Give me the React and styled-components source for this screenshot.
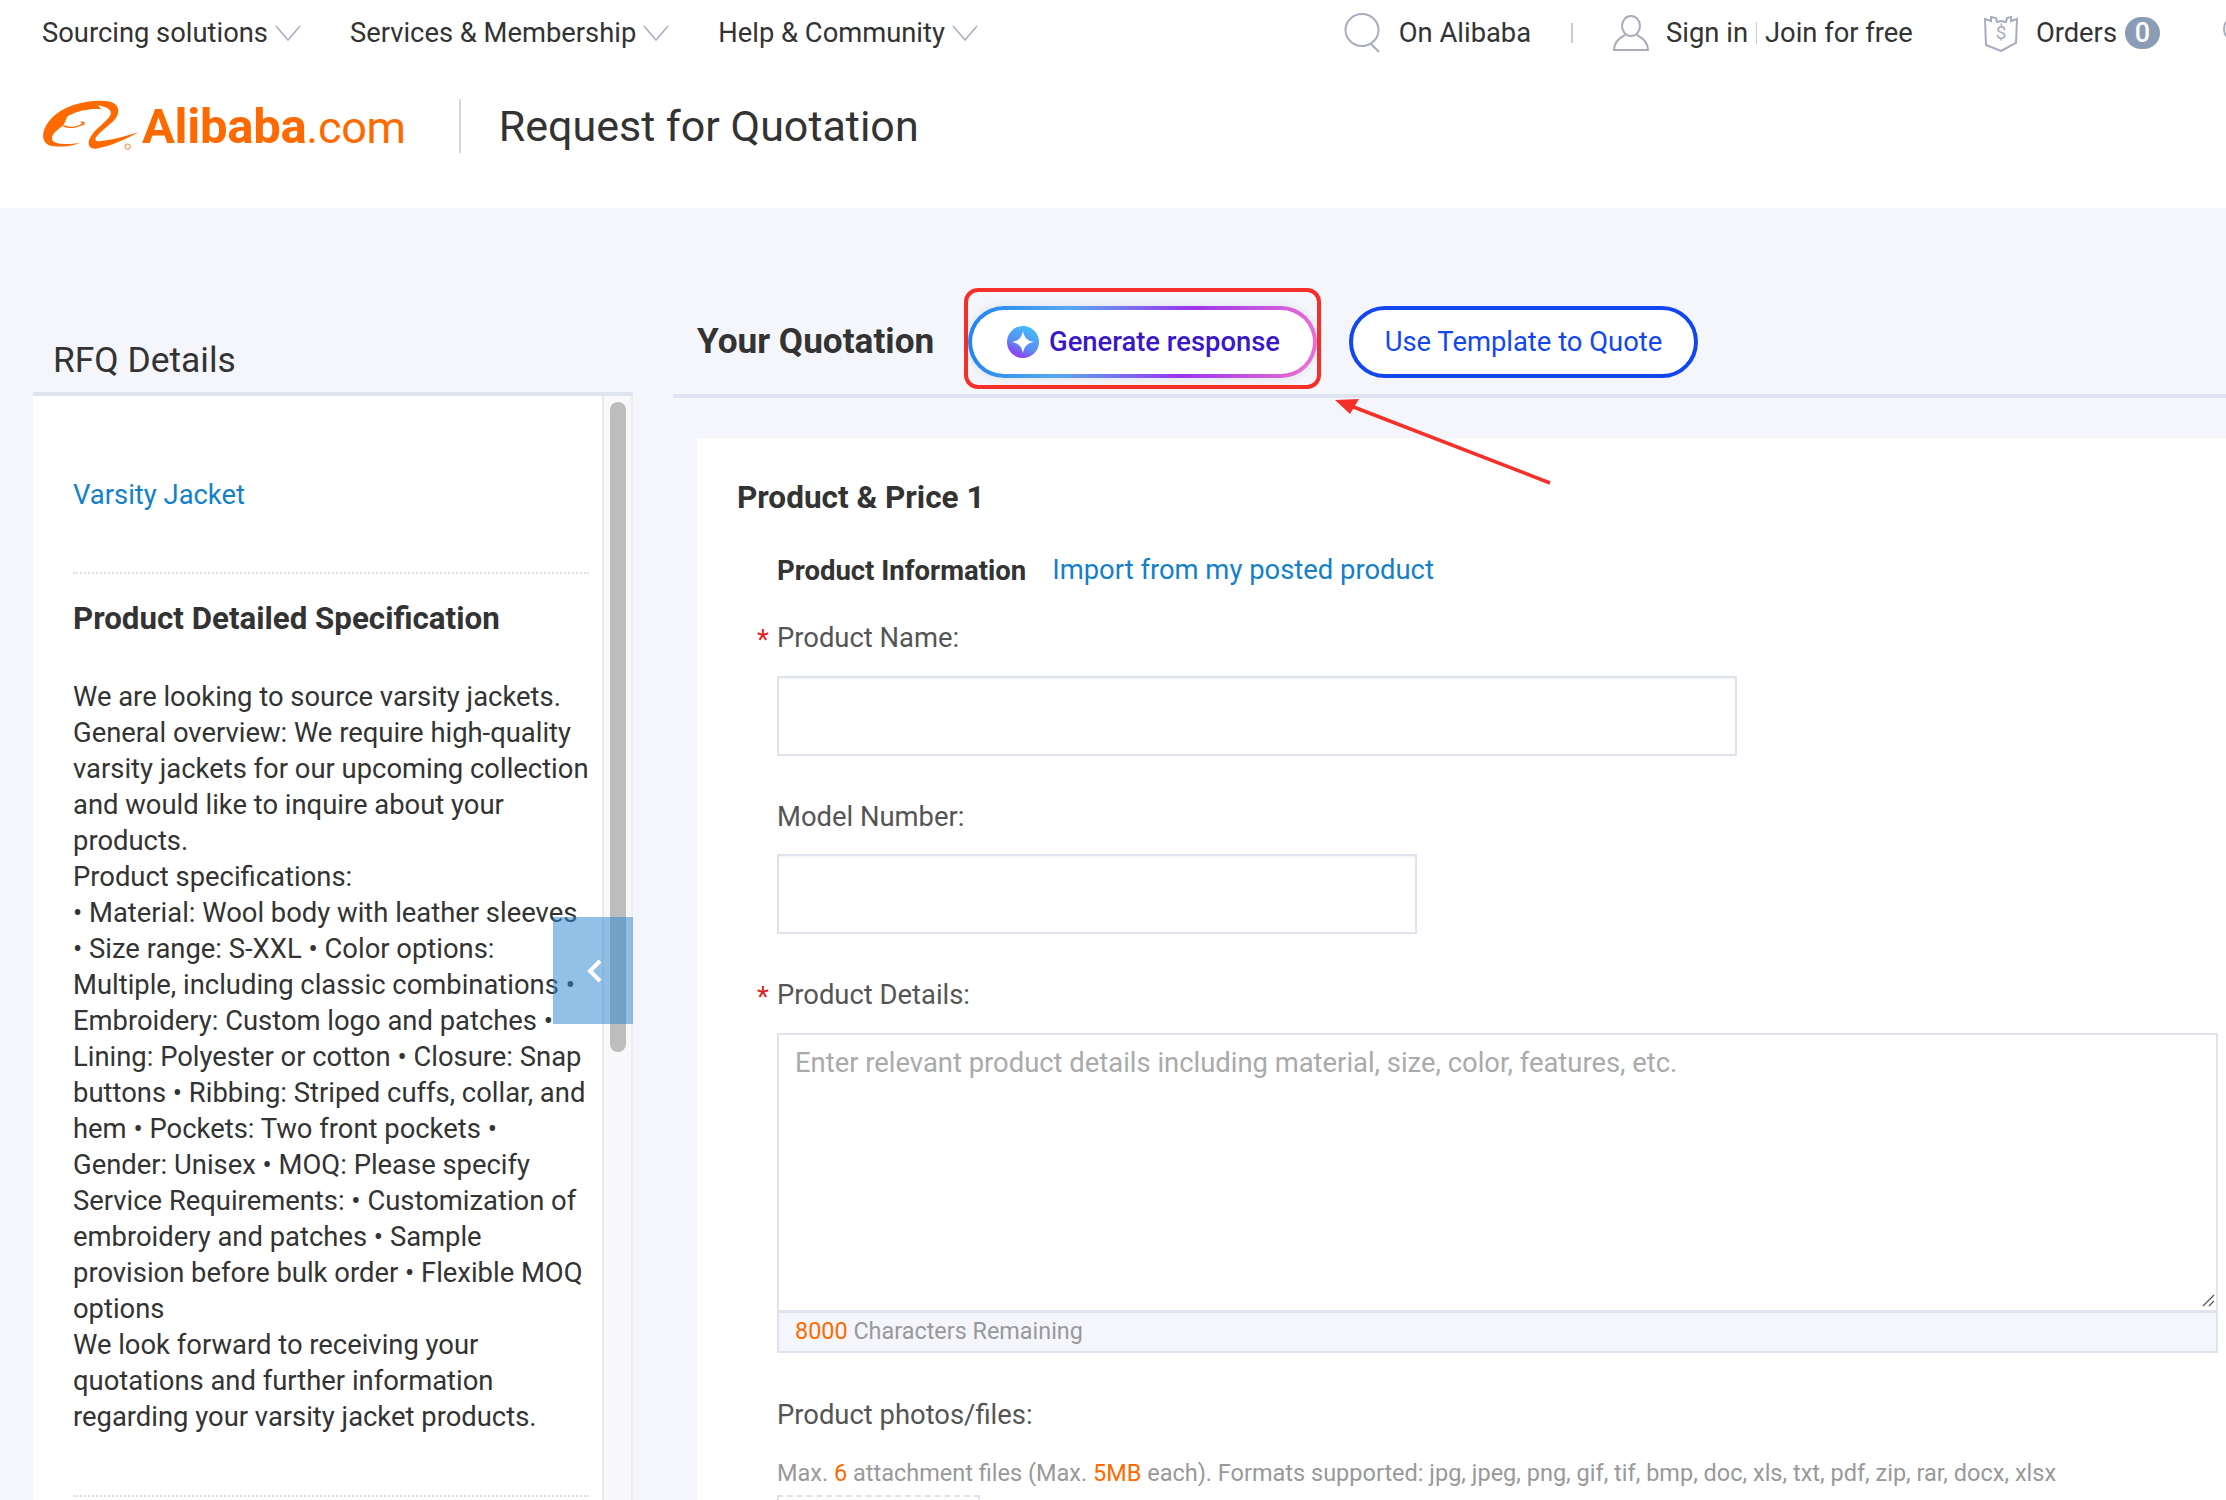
import React from 'react';
import styled, { createGlobalStyle } from 'styled-components';

const GlobalStyle = createGlobalStyle`
  html, body { margin: 0; padding: 0; }
  body { font-family: Roboto, "Liberation Sans", sans-serif; color: #333; background: #f4f6fb; }
  * { box-sizing: border-box; }
`;

const Page = styled.div`
  position: relative;
  width: 2226px;
  height: 1500px;
  overflow: hidden;
  background: #f4f6fb;
`;

const Header = styled.header`
  height: 208px;
  background: #fff;
  padding: 0 0 0 42px;
`;

const TopBar = styled.div`
  display: flex;
  align-items: center;
  height: 66px;
`;

const NavItem = styled.a`
  display: flex;
  align-items: center;
  gap: 7px;
  font-size: 27.35px;
  color: #333;
  margin-right: 49px;
  white-space: nowrap;
`;

const TopRight = styled.div`
  display: flex;
  align-items: center;
  margin-left: auto;
  margin-right: -8px;
`;

const TopLink = styled.span`
  display: flex;
  align-items: center;
  font-size: 27.35px;
  color: #333;
  white-space: nowrap;
  gap: ${p => p.$gap || 17}px;
  margin-right: ${p => p.$right || 0}px;
`;

const ThinBar = styled.i`
  display: inline-block;
  width: ${p => p.$w || 2}px;
  height: ${p => p.$h || 20}px;
  margin: 0 ${p => p.$m || 0}px;
  background: #c9ccd8;
`;

const Badge = styled.b`
  display: inline-flex;
  align-items: center;
  justify-content: center;
  width: 35px;
  height: 32px;
  margin-left: -9px;
  border-radius: 16px;
  background: #8b9cb5;
  color: #fff;
  font-weight: 500;
  font-size: 27px;
`;

const BrandRow = styled.div`
  display: flex;
  align-items: center;
  height: 66px;
  margin-top: 27px;
`;

const LogoText = styled.span`
  font-size: 49px;
  line-height: 1;
  font-weight: 700;
  color: #ff6a00;
  margin-left: 2px;
  letter-spacing: -0.3px;
  span { font-weight: 400; font-size: 45px; }
`;

const BrandRule = styled.i`
  width: 2px;
  height: 54px;
  background: #d5d8e2;
  margin: 0 38px 0 53px;
`;

const PageTitle = styled.h1`
  margin: 0;
  font-size: 43px;
  font-weight: 400;
  color: #333;
`;

const Main = styled.main`
  display: flex;
  gap: 40px;
  padding-left: 33px;
`;

const Side = styled.aside`
  position: relative;
  width: 600px;
  flex: none;
`;

const SideTitle = styled.h2`
  margin: 0;
  height: 188px;
  padding: 126px 0 0 20px;
  border-bottom: 4px solid #dfe4ef;
  font-size: 35.4px;
  line-height: 52px;
  font-weight: 400;
  color: #333;
`;

const SideBody = styled.div`
  display: flex;
  height: 1108px;
`;

const SideContent = styled.div`
  width: 573px;
  background: #fff;
  padding: 82px 13px 0 40px;
  border-right: 2px solid #e8e9ee;
`;

const Track = styled.div`
  flex: 1;
  padding: 6px 5px 0 6px;
  background: #f8f8fa;
  border-right: 2px solid #eee;
`;

const Thumb = styled.div`
  width: 16px;
  height: 650px;
  border-radius: 8px;
  background: #bdbdbd;
`;

const Link = styled.a`
  color: #1380ca;
  font-size: 27.4px;
  line-height: 34px;
`;

const Dotted = styled.div`
  border-top: 2px dotted #dcdfe6;
  margin-top: ${p => p.$top}px;
`;

const SpecTitle = styled.h3`
  margin: 24px 0 0;
  font-size: 31.3px;
  line-height: 42px;
  font-weight: 700;
  color: #333;
`;

const SpecText = styled.p`
  margin: 39px 0 0;
  font-size: 27.4px;
  line-height: 36px;
  color: #333;
  white-space: nowrap;
`;

const Collapse = styled.button`
  position: absolute;
  left: 520px;
  top: 709px;
  width: 80px;
  height: 107px;
  padding: 0 0 0 4px;
  border: 0;
  display: flex;
  align-items: center;
  justify-content: center;
  background: rgba(46, 135, 207, 0.52);
`;

const Right = styled.section`
  flex: 1;
  min-width: 0;
`;

const QuoteBar = styled.div`
  display: flex;
  align-items: center;
  height: 190px;
  padding: 80px 0 0 24px;
  border-bottom: 4px solid #dfe4ef;
`;

const QuoteTitle = styled.h2`
  margin: 0;
  width: 267px;
  font-size: 35.2px;
  font-weight: 700;
  color: #333;
  white-space: nowrap;
`;

const Callout = styled.div`
  display: flex;
  align-items: center;
  justify-content: center;
  width: 357px;
  height: 101px;
  margin-top: -5px;
  padding-top: 6px;
  border: 4px solid #f5302a;
  border-radius: 14px;
`;

const PillButton = styled.button`
  display: inline-flex;
  align-items: center;
  justify-content: center;
  gap: 10px;
  width: 349px;
  height: 72px;
  border-radius: 36px;
  font-family: inherit;
  font-size: 27.4px;
  background: #fff;
  border: 4px solid #1347ee;
  color: #1347ee;
  margin-left: ${p => p.$left || 0}px;
  margin-top: ${p => p.$top || 0}px;
`;

const GenerateButton = styled(PillButton)`
  flex: none;
  width: 349px;
  padding-left: 8px;
  border-color: transparent;
  background: linear-gradient(#fff, #fff) padding-box,
    linear-gradient(100deg, #1d83f0 0%, #57a9ee 28%, #9a35ee 62%, #ef72d0 100%) border-box;
  color: #3a18c8;
  font-weight: 500;
  box-shadow: 0 0 8px rgba(60, 60, 120, 0.12);
`;

const Card = styled.div`
  margin: 40px 0 0 24px;
  padding: 37px 0 0 40px;
  height: 1100px;
  background: #fff;
`;

const CardTitle = styled.h3`
  margin: 0;
  font-size: 31.5px;
  line-height: 46px;
  font-weight: 700;
  color: #333;
`;

const InfoRow = styled.div`
  display: flex;
  gap: 26px;
  align-items: center;
  margin: 27px 0 0 40px;
  height: 44px;
  font-size: 27.4px;
  strong { font-weight: 700; color: #333; font-size: 27.5px; }
`;

const Label = styled.label`
  display: block;
  position: relative;
  margin: ${p => p.$top}px 0 0 40px;
  font-size: 27.4px;
  line-height: 40px;
  color: #555;
`;

const Star = styled.span`
  position: absolute;
  left: -20px;
  top: 2px;
  color: #e02020;
`;

const TextInput = styled.div`
  width: ${p => p.$w}px;
  height: 80px;
  margin: ${p => p.$top}px 0 0 40px;
  border: 2px solid #dfe3ee;
  box-shadow: inset 0 1px 2px #f0f2f6;
`;

const AreaBox = styled.div`
  position: relative;
  width: 1441px;
  margin: 18px 0 0 40px;
  border: 2px solid #dfe3ee;
`;

const Placeholder = styled.div`
  height: 275px;
  padding: 10px 16px;
  font-size: 27.4px;
  line-height: 36px;
  color: #aaa;
`;

const Grip = styled.svg`
  position: absolute;
  right: 1px;
  top: 258px;
`;

const Counter = styled.div`
  height: 41px;
  padding: 0 16px;
  border-top: 3px solid #dfe3ee;
  background: #f4f6fb;
  font-size: 23.4px;
  line-height: 37px;
  color: #999;
  span { color: #ff6a00; }
`;

const Hint = styled.p`
  margin: 20px 0 0 40px;
  font-size: 23.5px;
  line-height: 36px;
  color: #999;
  white-space: nowrap;
  span { color: #ff6a00; }
`;

const UploadBox = styled.div`
  width: 203px;
  height: 60px;
  margin: 4px 0 0 40px;
  border: 2px dashed #dfe3ee;
`;

const ArrowMark = styled.svg`
  position: absolute;
  left: 1325px;
  top: 392px;
`;

const Chevron = () => (
  <svg width="26" height="16" viewBox="0 0 26 16" fill="none">
    <path d="M1 1l12 14L25 1" stroke="#a9acbd" strokeWidth="1.5" />
  </svg>
);

const SearchIcon = () => (
  <svg width="38" height="40" viewBox="0 0 38 40" fill="none" stroke="#a9acbd" strokeWidth="2">
    <ellipse cx="18" cy="17" rx="16.5" ry="16" />
    <path d="M27 31l8 8" />
  </svg>
);

const UserIcon = () => (
  <svg width="36" height="36" viewBox="0 0 36 36" fill="none" stroke="#a9acbd" strokeWidth="2">
    <ellipse cx="18" cy="11" rx="9" ry="10" />
    <path d="M12 20C6 23 1 28 1 35h34c0-7-5-12-11-15" />
  </svg>
);

const OrdersIcon = () => (
  <svg width="36" height="38" viewBox="0 0 36 38" fill="none" stroke="#a9acbd" strokeWidth="2">
    <path d="M2 5l6 2V3l5 1 1 4 4-1 5 1 1-4 4-1v4l6-2-1 24-15 8-15-6z" />
    <text x="18" y="25" fontSize="19" textAnchor="middle" fill="#a9acbd" stroke="none" fontFamily="Roboto, sans-serif">$</text>
  </svg>
);

const EdgeIcon = styled.svg`
  position: absolute;
  left: 2222px;
  top: 14px;
`;

const AlibabaMark = () => (
  <svg width="98" height="52" viewBox="38 42 294 156">
    <path
      fill="#ff6a00"
      d="M75 181C48 180 34 160 45 130C58 95 95 68 135 56C170 46 205 42 235 46C262 50 272 66 264 88C255 110 225 125 205 148C194 160 196 167 212 166C250 162 290 150 327 139C290 160 240 182 200 188C178 190 172 172 184 152C198 128 232 108 243 88C250 72 232 62 205 58L216 70C190 66 150 72 120 88C108 94 112 106 100 120C82 132 62 148 70 164C80 176 120 176 153 170C130 180 100 183 75 181Z"
    />
    <path fill="none" stroke="#ff6a00" strokeWidth="4" d="M102 120C125 128 150 124 163 112M155 108l9 2l-2 8" />
    <circle cx="295" cy="182" r="8" fill="none" stroke="#ff6a00" strokeWidth="2.5" />
  </svg>
);

const SparkIcon = () => (
  <svg width="32" height="32" viewBox="0 0 32 32">
    <defs>
      <linearGradient id="spark" x1="0.75" y1="0" x2="0.25" y2="1">
        <stop offset="0" stopColor="#3fc0f8" />
        <stop offset="0.6" stopColor="#5a8cf5" />
        <stop offset="1" stopColor="#9a2cf0" />
      </linearGradient>
    </defs>
    <circle cx="16" cy="16" r="16" fill="url(#spark)" />
    <path fill="#fff" d="M16 5c1.5 7 4 9.500 11 11c-7 1.500-9.500 4-11 11c-1.500-7-4-9.500-11-11c7-1.500 9.500-4 11-11z" />
  </svg>
);

const specLines = [
  'We are looking to source varsity jackets.',
  'General overview: We require high-quality',
  'varsity jackets for our upcoming collection',
  'and would like to inquire about your',
  'products.',
  'Product specifications:',
  '• Material: Wool body with leather sleeves',
  '• Size range: S-XXL • Color options:',
  'Multiple, including classic combinations •',
  'Embroidery: Custom logo and patches •',
  'Lining: Polyester or cotton • Closure: Snap',
  'buttons • Ribbing: Striped cuffs, collar, and',
  'hem • Pockets: Two front pockets •',
  'Gender: Unisex • MOQ: Please specify',
  'Service Requirements: • Customization of',
  'embroidery and patches • Sample',
  'provision before bulk order • Flexible MOQ',
  'options',
  'We look forward to receiving your',
  'quotations and further information',
  'regarding your varsity jacket products.',
];

export default function App() {
  return (
    <Page>
      <GlobalStyle />
      <Header>
        <TopBar>
          <NavItem>Sourcing solutions <Chevron /></NavItem>
          <NavItem>Services &amp; Membership <Chevron /></NavItem>
          <NavItem>Help &amp; Community <Chevron /></NavItem>
          <TopRight>
            <TopLink><SearchIcon />On Alibaba</TopLink>
            <ThinBar $m={40} />
            <TopLink $right={70}>
              <UserIcon />
              <span>Sign in</span>
              <ThinBar $w={1} $h={22} $m={-9} />
              <span>Join for free</span>
            </TopLink>
            <TopLink $right={74}>
              <OrdersIcon />
              Orders
              <Badge>0</Badge>
            </TopLink>
          </TopRight>
        </TopBar>
        <BrandRow>
          <AlibabaMark />
          <LogoText>Alibaba<span>.com</span></LogoText>
          <BrandRule />
          <PageTitle>Request for Quotation</PageTitle>
        </BrandRow>
      </Header>
      <Main>
        <Side>
          <SideTitle>RFQ Details</SideTitle>
          <SideBody>
            <SideContent>
              <Link>Varsity Jacket</Link>
              <Dotted $top={60} />
              <SpecTitle>Product Detailed Specification</SpecTitle>
              <SpecText>
                {specLines.map(line => (
                  <React.Fragment key={line}>{line}<br /></React.Fragment>
                ))}
              </SpecText>
              <Dotted $top={60} />
            </SideContent>
            <Track><Thumb /></Track>
          </SideBody>
          <Collapse aria-label="Collapse">
            <svg width="16" height="26" viewBox="0 0 16 26" fill="none">
              <path d="M13 3L3 13l10 10" stroke="#fff" strokeWidth="4" />
            </svg>
          </Collapse>
        </Side>
        <Right>
          <QuoteBar>
            <QuoteTitle>Your Quotation</QuoteTitle>
            <Callout>
              <GenerateButton><SparkIcon />Generate response</GenerateButton>
            </Callout>
            <PillButton $left={28} $top={1}>Use Template to Quote</PillButton>
          </QuoteBar>
          <Card>
            <CardTitle>Product &amp; Price 1</CardTitle>
            <InfoRow>
              <strong>Product Information</strong>
              <Link>Import from my posted product</Link>
            </InfoRow>
            <Label $top={26}><Star>*</Star>Product Name:</Label>
            <TextInput $w={960} $top={18} />
            <Label $top={41}>Model Number:</Label>
            <TextInput $w={640} $top={17} />
            <Label $top={41}><Star>*</Star>Product Details:</Label>
            <AreaBox>
              <Placeholder>Enter relevant product details including material, size, color, features, etc.</Placeholder>
              <Grip width="14" height="14" viewBox="0 0 14 14" fill="none" stroke="#555" strokeWidth="1.2">
                <path d="M2 13L13 2M8 13l5-5" />
              </Grip>
              <Counter><span>8000</span> Characters Remaining</Counter>
            </AreaBox>
            <Label $top={42}>Product photos/files:</Label>
            <Hint>
              Max. <span>6</span> attachment files (Max. <span>5MB</span> each). Formats supported: jpg, jpeg, png, gif, tif, bmp, doc, xls, txt, pdf, zip, rar, docx, xlsx
            </Hint>
            <UploadBox />
          </Card>
        </Right>
      </Main>
      <ArrowMark width="235" height="100" viewBox="0 0 235 100" fill="none">
        <path d="M225 91L26 14" stroke="#f5302a" strokeWidth="3.500" />
        <path d="M10 8l24-1-9 15z" fill="#f5302a" />
      </ArrowMark>
      <EdgeIcon width="20" height="30" viewBox="0 0 20 30" fill="none" stroke="#a9acbd" strokeWidth="2">
        <circle cx="15" cy="15" r="13" />
      </EdgeIcon>
    </Page>
  );
}
